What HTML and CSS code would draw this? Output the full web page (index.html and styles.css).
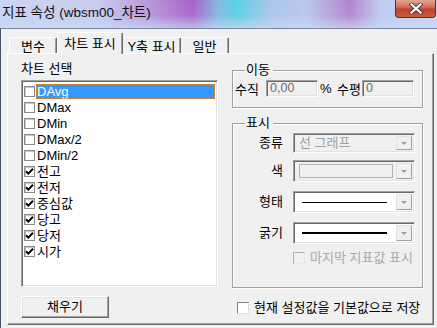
FILE: index.html
```html
<!DOCTYPE html>
<html>
<head>
<meta charset="utf-8">
<link rel="stylesheet" href="styles.css">
</head>
<body>
<div class="window">
  <div class="titlebar">
    <span class="title">지표 속성 (wbsm00_차트)</span>
    <div class="close">
      <svg width="14" height="11" viewBox="0 0 14 11"><path d="M2.5 1.5 L11.5 9.5 M11.5 1.5 L2.5 9.5" stroke="#3a3a3a" stroke-width="4" stroke-linecap="square"/><path d="M2.5 1.5 L11.5 9.5 M11.5 1.5 L2.5 9.5" stroke="#ffffff" stroke-width="2.2" stroke-linecap="square"/></svg>
    </div>
  </div>
  <div class="client">
    <div class="tabs">
      <div class="tab t1">변수</div>
      <div class="tab t2 active">차트 표시</div>
      <div class="tab t3">Y축 표시</div>
      <div class="tab t4">일반</div>
    </div>
    <div class="panel">
      <div class="left">
        <div class="label">차트 선택</div>
        <div class="listbox">
          <div class="item selected"><span class="cb"></span><span class="txt">DAvg</span></div>
          <div class="item"><span class="cb"></span><span class="txt">DMax</span></div>
          <div class="item"><span class="cb"></span><span class="txt">DMin</span></div>
          <div class="item"><span class="cb"></span><span class="txt">DMax/2</span></div>
          <div class="item"><span class="cb"></span><span class="txt">DMin/2</span></div>
          <div class="item"><span class="cb on"><svg width="9" height="9" viewBox="0 0 9 9"><path d="M1 4.2 L3.3 6.6 L8 1.8" fill="none" stroke="#000" stroke-width="2"/></svg></span><span class="txt">전고</span></div>
          <div class="item"><span class="cb on"><svg width="9" height="9" viewBox="0 0 9 9"><path d="M1 4.2 L3.3 6.6 L8 1.8" fill="none" stroke="#000" stroke-width="2"/></svg></span><span class="txt">전저</span></div>
          <div class="item"><span class="cb on"><svg width="9" height="9" viewBox="0 0 9 9"><path d="M1 4.2 L3.3 6.6 L8 1.8" fill="none" stroke="#000" stroke-width="2"/></svg></span><span class="txt">중심값</span></div>
          <div class="item"><span class="cb on"><svg width="9" height="9" viewBox="0 0 9 9"><path d="M1 4.2 L3.3 6.6 L8 1.8" fill="none" stroke="#000" stroke-width="2"/></svg></span><span class="txt">당고</span></div>
          <div class="item"><span class="cb on"><svg width="9" height="9" viewBox="0 0 9 9"><path d="M1 4.2 L3.3 6.6 L8 1.8" fill="none" stroke="#000" stroke-width="2"/></svg></span><span class="txt">당저</span></div>
          <div class="item"><span class="cb on"><svg width="9" height="9" viewBox="0 0 9 9"><path d="M1 4.2 L3.3 6.6 L8 1.8" fill="none" stroke="#000" stroke-width="2"/></svg></span><span class="txt">시가</span></div>
        </div>
        <div class="btn">채우기</div>
      </div>
      <div class="right">
        <div class="group move">
          <div class="legend">이동</div>
          <div class="moverow">
            <span class="mlbl">수직</span>
            <span class="field">0,00</span>
            <span class="pct">%</span>
            <span class="mlbl2">수평</span>
            <span class="field">0</span>
          </div>
        </div>
        <div class="group display">
          <div class="legend">표시</div>
          <div class="drow first">
            <span class="dlbl">종류</span>
            <div class="combo disabled short"><span class="ctext">선 그래프</span><span class="dd"><i></i></span></div>
          </div>
          <div class="drow second">
            <span class="dlbl">색</span>
            <div class="combo disabled"><span class="swatch"></span><span class="dd"><i></i></span></div>
          </div>
          <div class="drow">
            <span class="dlbl">형태</span>
            <div class="combo"><span class="line thin"></span><span class="dd"><i></i></span></div>
          </div>
          <div class="drow">
            <span class="dlbl">굵기</span>
            <div class="combo"><span class="line thick"></span><span class="dd"><i></i></span></div>
          </div>
          <div class="lastrow">
            <span class="box dis"></span><span class="distext">마지막 지표값 표시</span>
          </div>
        </div>
        <div class="saverow">
          <span class="box"></span><span>현재 설정값을 기본값으로 저장</span>
        </div>
      </div>
    </div>
  </div>
</div>
</body>
</html>
```
FILE: styles.css
```css
* { box-sizing: border-box; }
html, body { margin: 0; padding: 0; }
body {
  width: 437px;
  height: 328px;
  overflow: hidden;
  background: #f0f0f0;
  font-family: "Liberation Sans", "Noto Sans CJK KR", sans-serif;
  font-size: 13px;
  color: #000;
}
.window { width: 437px; height: 328px; }
.titlebar {
  height: 28px;
  display: flex;
  justify-content: space-between;
  align-items: flex-start;
  background:
    linear-gradient(180deg, rgba(255,255,255,0.05) 0%, rgba(205,220,245,0.15) 55%, rgba(200,218,245,0.75) 100%),
    linear-gradient(90deg, #c9d2ee 0%, #c6cbee 22%, #b793d8 34%, #a458c4 44%, #7fb4e0 50%, #4fcfe2 54%, #a9c2ea 62%, #b8c6ec 70%, #b07ccb 80%, #bfc8ee 87%, #c4d6f2 100%);
}
.title {
  padding: 5px 0 0 2px;
  line-height: 16px;
  font-size: 13.5px;
  color: #111;
}
.close {
  width: 41px;
  height: 18px;
  margin-right: 1px;
  border: 1px solid #6b2b22;
  border-top: none;
  border-radius: 0 0 4px 4px;
  background: linear-gradient(180deg, #e7a594 0%, #d6705c 40%, #c1412c 55%, #c85a3e 100%);
  display: flex;
  align-items: center;
  justify-content: center;
}
.client {
  height: 300px;
  border-top: 1px solid #7c879c;
  border-left: 1px solid #44526c;
}
.tabs {
  height: 24px;
  display: flex;
  align-items: flex-end;
  padding-left: 8px;
}
.tab {
  height: 16px;
  border-top: 1px solid #fff;
  border-left: 1px solid #fff;
  border-right: 1px solid #696969;
  border-radius: 2px 2px 0 0;
  box-shadow: inset -1px 0 #a0a0a0;
  padding-top: 1px;
  line-height: 15px;
  text-align: center;
}
.t1 { width: 48px; }
.t2 { width: 66px; }
.t3 { width: 58px; border-left: none; }
.t4 { width: 48px; border-left: none; }
.tab.active {
  position: relative;
  z-index: 1;
  height: 22px;
  margin-bottom: -1px;
  padding-top: 3px;
  line-height: 15px;
  background: #f0f0f0;
}
.panel {
  width: 427px;
  height: 272px;
  margin-left: 6px;
  border-top: 1px solid #fff;
  border-left: 1px solid #fff;
  border-right: 1px solid #696969;
  border-bottom: 1px solid #696969;
  box-shadow: inset -1px -1px #a0a0a0;
  display: grid;
  grid-template-columns: 197px 191px;
  column-gap: 14px;
  padding: 7px 0 0 13px;
}
.label { line-height: 16px; height: 16px; }
.listbox {
  margin-top: 3px;
  height: 207px;
  background: #fff;
  border-top: 1px solid #a0a0a0;
  border-left: 1px solid #a0a0a0;
  border-right: 1px solid #fff;
  border-bottom: 1px solid #fff;
  box-shadow: inset 1px 1px #696969, inset -1px -1px #e3e3e3;
  padding: 2px 2px 0 2px;
}
.item {
  height: 16px;
  display: flex;
  align-items: center;
}
.cb {
  width: 11px;
  height: 11px;
  border: 1px solid #8a8a8a;
  background: #fff;
  box-shadow: inset 1px 1px #c8c8c8;
  display: flex;
  align-items: center;
  justify-content: center;
  flex: none;
}
.txt {
  margin-left: 1px;
  padding-left: 1px;
  line-height: 15px;
  height: 15px;
  flex: 1;
}
.item.selected .txt {
  background: #3399ff;
  color: #fff;
  outline: 1px dotted #d38a3a;
  outline-offset: -1px;
}
.btn {
  margin-top: 9px;
  width: 88px;
  height: 22px;
  border-top: 1px solid #fff;
  border-left: 1px solid #fff;
  border-right: 1px solid #696969;
  border-bottom: 1px solid #696969;
  box-shadow: inset -1px -1px #a0a0a0, inset 1px 1px #e3e3e3;
  background: #f0f0f0;
  text-align: center;
  line-height: 19px;
}
.right { padding-top: 9px; }
.group {
  border: 1px solid #a0a0a0;
  box-shadow: inset 1px 1px #fff, 1px 1px #fff;
}
.legend {
  display: table;
  height: 16px;
  margin-top: -9px;
  margin-bottom: -2px;
  padding: 0 3px 0 1px;
  line-height: 16px;
  background: #f0f0f0;
}
.move { height: 38px; padding-left: 2px; }
.move .legend { margin-left: 10px; }
.moverow {
  display: flex;
  align-items: center;
  height: 17px;
  margin-top: 4px;
}
.mlbl { width: 31px; }
.field {
  width: 52px;
  height: 17px;
  border-top: 1px solid #a0a0a0;
  border-left: 1px solid #a0a0a0;
  border-right: 1px solid #fff;
  border-bottom: 1px solid #fff;
  box-shadow: inset 1px 1px #696969, inset -1px -1px #e3e3e3;
  color: #6d6d6d;
  padding-left: 3px;
  line-height: 15px;
  font-size: 12.5px;
}
.pct { width: 19px; padding-left: 2px; }
.mlbl2 { width: 25px; }
.display { margin-top: 15px; height: 165px; }
.display .legend { margin-left: 12px; }
.drow {
  display: flex;
  align-items: center;
  margin-top: 9px;
}
.drow.first { margin-top: 4px; }
.drow.second { margin-top: 7px; }
.dlbl { width: 50px; text-align: right; margin-right: 10px; line-height: 16px; }
.combo {
  width: 122px;
  height: 22px;
  border-top: 1px solid #a0a0a0;
  border-left: 1px solid #a0a0a0;
  border-right: 1px solid #fff;
  border-bottom: 1px solid #fff;
  box-shadow: inset 1px 1px #696969, inset -1px -1px #e3e3e3;
  background: #fff;
  display: flex;
  align-items: center;
  padding: 2px;
}
.combo.short { height: 20px; }
.combo.disabled { background: #f0f0f0; }
.ctext { flex: 1; color: #a0a0a0; padding-left: 3px; line-height: 14px; }
.swatch {
  flex: 1;
  height: 14px;
  margin: 0 3px;
  border: 1px solid #b4b4b4;
  background: #f0f0f0;
}
.line { flex: 1; margin: 0 9px 0 6px; background: #000; }
.line.thin { height: 1px; }
.line.thick { height: 2px; }
.dd {
  width: 16px;
  align-self: stretch;
  border: 1px solid #e3e3e3;
  border-right-color: #a0a0a0;
  border-bottom-color: #a0a0a0;
  background: #f0f0f0;
  display: flex;
  align-items: center;
  justify-content: center;
}
.dd i {
  width: 0;
  height: 0;
  border-left: 3px solid transparent;
  border-right: 3px solid transparent;
  border-top: 3px solid #a0a0a0;
}
.lastrow {
  display: flex;
  align-items: center;
  height: 16px;
  line-height: 16px;
  margin: 6px 0 0 60px;
}
.box {
  width: 12px;
  height: 12px;
  border-top: 1px solid #808080;
  border-left: 1px solid #808080;
  border-right: 1px solid #e0e0e0;
  border-bottom: 1px solid #e0e0e0;
  background: #fff;
  flex: none;
}
.box.dis { background: #f0f0f0; border-color: #b0b0b0 #e8e8e8 #e8e8e8 #b0b0b0; }
.distext { margin-left: 5px; color: #a8a8a8; }
.saverow {
  display: flex;
  align-items: center;
  height: 16px;
  line-height: 16px;
  margin: 12px 0 0 5px;
}
.saverow .box { margin-right: 5px; }
```
